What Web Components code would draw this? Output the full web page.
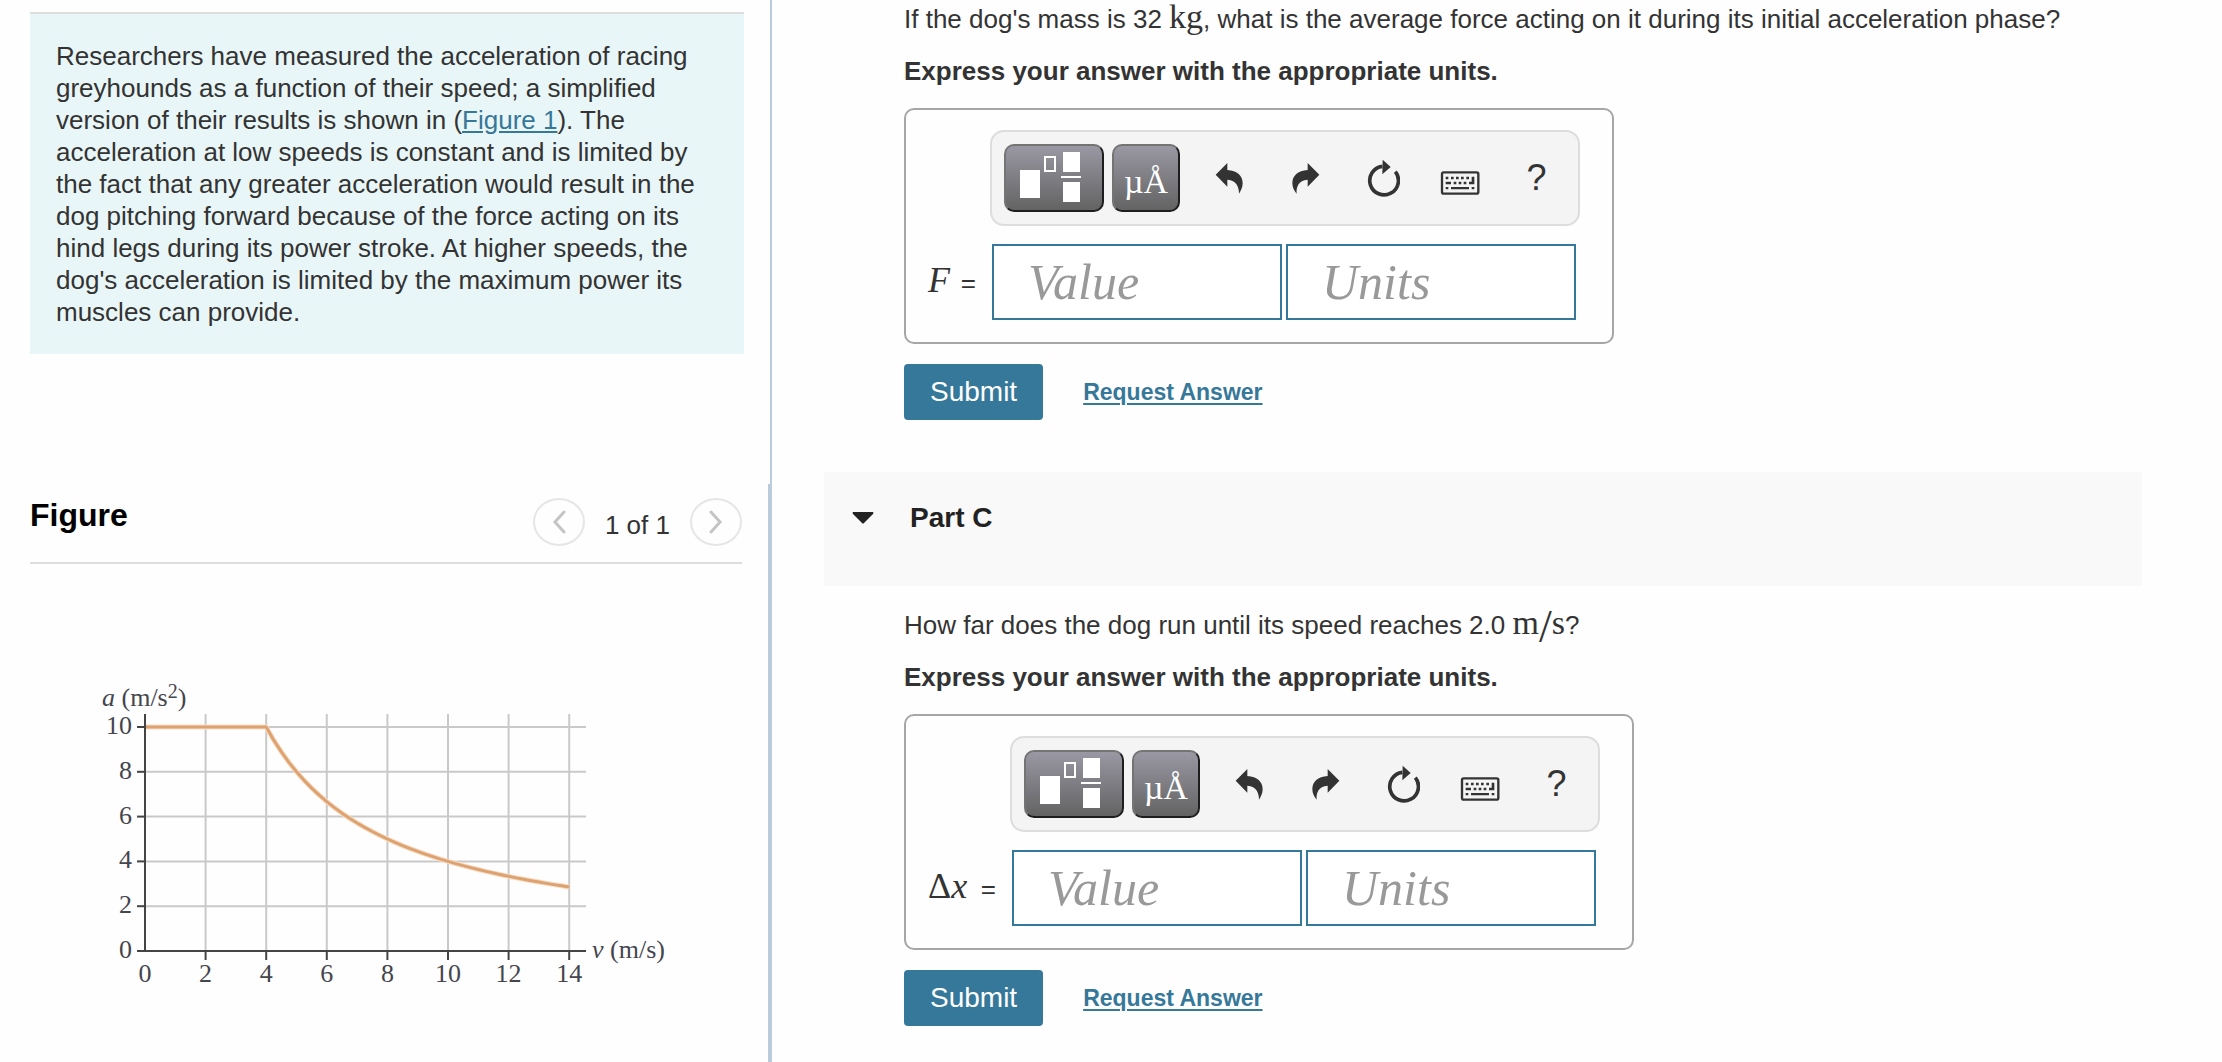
<!DOCTYPE html>
<html lang="en">
<head>
<meta charset="utf-8">
<title>Greyhound acceleration</title>
<style>
  html, body { margin: 0; }
  body {
    background: #fefefe;
    color: #333;
    font: 26px/32px "Liberation Sans", Arial, sans-serif;
  }
  a { color: #367899; }
  p { margin: 0; }
  .unit { font-family: "Liberation Serif", "Times New Roman", serif; font-size: 34px; line-height: 0; }
  .slash { font-size: 46px; vertical-align: -8px; }
</style>
</head>
<body>

<problem-page>
  <intro-panel slot="side">
    Researchers have measured the acceleration of racing greyhounds as a
    function of their speed; a simplified version of their results is shown in
    (<a href="#figure">Figure 1</a>). The acceleration at low speeds is constant
    and is limited by the fact that any greater acceleration would result in
    the dog pitching forward because of the force acting on its hind legs
    during its power stroke. At higher speeds, the dog's acceleration is
    limited by the maximum power its muscles can provide.
  </intro-panel>
  <figure-panel slot="side" id="figure" heading="Figure" position="1 of 1">
    <speed-chart></speed-chart>
  </figure-panel>

  <problem-part>
    <p>If the dog's mass is 32 <span class="unit">kg</span>, what is the average force acting on it during its initial acceleration phase?</p>
    <strong slot="instructions">Express your answer with the appropriate units.</strong>
    <answer-box slot="answer" symbol="&lt;i&gt;F&lt;/i&gt;"></answer-box>
  </problem-part>
  <problem-part heading="Part C">
    <p>How far does the dog run until its speed reaches 2.0 <span class="unit">m<span class="slash">/</span>s</span>?</p>
    <strong slot="instructions">Express your answer with the appropriate units.</strong>
    <answer-box slot="answer" symbol="Δ&lt;i&gt;x&lt;/i&gt;" wide></answer-box>
  </problem-part>
</problem-page>

<script>
'use strict';

class ProblemPage extends HTMLElement {
  constructor() {
    super();
    this.attachShadow({ mode: 'open' }).innerHTML = `
      <style>
        :host {
          display: grid;
          grid-template-columns: minmax(0, 386fr) minmax(0, 725fr);
          min-height: 100vh;
        }
        aside { display: flex; flex-direction: column; }
        main { padding: 0 80px 20px 52px; }
      </style>
      <aside><slot name="side"></slot></aside>
      <main><slot></slot></main>
    `;
  }
}

class IntroPanel extends HTMLElement {
  constructor() {
    super();
    this.attachShadow({ mode: 'open' }).innerHTML = `
      <style>
        :host {
          display: block;
          padding: 12px 26px 130px 30px;
          border-right: 2px solid #bccbdb;
        }
        div {
          padding: 26px;
          border-top: 2px solid #ddd;
          background: #e9f6f7;
        }
      </style>
      <div><slot></slot></div>
    `;
  }
}

class FigurePanel extends HTMLElement {
  constructor() {
    super();
    this.attachShadow({ mode: 'open' }).innerHTML = `
      <style>
        :host {
          display: block;
          flex: 1;
          padding: 14px 26px 0 30px;
          border-right: 4px solid #bccbdb;
        }
        header {
          display: flex;
          align-items: flex-start;
          justify-content: space-between;
          padding-bottom: 16px;
          border-bottom: 2px solid #ddd;
        }
        h2 { margin: 0; font-size: 32px; line-height: 34px; color: #000; }
        nav { display: flex; align-items: center; gap: 20px; }
        nav span { padding-top: 6px; }
        button {
          display: grid;
          place-items: center;
          width: 52px;
          height: 48px;
          padding: 0;
          border: 2px solid #e6e6e6;
          border-radius: 50%;
          background: none;
        }
        svg { fill: none; stroke: #c4c4c4; stroke-width: 3; stroke-linecap: round; }
      </style>
      <header>
        <h2>${this.getAttribute('heading')}</h2>
        <nav>
          <button aria-label="Previous figure"><svg width="16" height="24"><path d="M13 2L4 12L13 22"/></svg></button>
          <span>${this.getAttribute('position')}</span>
          <button aria-label="Next figure"><svg width="16" height="24"><path d="M3 2L12 12L3 22"/></svg></button>
        </nav>
      </header>
      <slot></slot>
    `;
  }
}

// acceleration against speed: flat up to 4 m/s, then limited by power (a = 40 / v)
class SpeedChart extends HTMLElement {
  constructor() {
    super();
    const x = v => 115 + v * 30.3;
    const y = a => 307 - a * 22.4;
    let grid = '';
    let ticks = '';
    let labels = '';

    for (let v = 0; v <= 14; v += 2) {
      if (v) {
        grid += `<path d="M${x(v)} 70V${y(0)}"/>`;
        ticks += `<path d="M${x(v)} ${y(0)}v9"/>`;
      }
      labels += `<text x="${x(v)}" y="338" text-anchor="middle">${v}</text>`;
    }
    for (let a = 0; a <= 10; a += 2) {
      if (a) grid += `<path d="M${x(0)} ${y(a)}H556"/>`;
      ticks += `<path d="M107 ${y(a)}H${x(0)}"/>`;
      labels += `<text x="102" y="${y(a) + 7}" text-anchor="end">${a}</text>`;
    }
    let curve = `M${x(0)} ${y(10)}H${x(4)}`;
    for (let v = 4.25; v <= 14; v += 0.25) {
      curve += `L${x(v)} ${y(40 / v)}`;
    }

    this.attachShadow({ mode: 'open' }).innerHTML = `
      <style>
        :host { display: block; padding-top: 80px; }
        svg { display: block; max-width: 100%; }
        text { font: 26px "Liberation Serif", "Times New Roman", serif; fill: #45454d; }
        .grid { stroke: #c9c9c9; stroke-width: 2; }
        .axis { stroke: #444; stroke-width: 2; fill: none; }
        .curve { fill: none; stroke-linejoin: round; }
      </style>
      <svg width="660" height="350" viewBox="0 0 660 350" role="img" aria-label="Acceleration against speed">
        <g class="grid">${grid}</g>
        <path class="curve" d="${curve}" stroke="#f8dcc2" stroke-width="5"/>
        <path class="curve" d="${curve}" stroke="#dda271" stroke-width="3"/>
        <g class="axis">${ticks}<path d="M${x(0)} 70V${y(0)}H556"/></g>
        ${labels}
        <text x="72" y="62"><tspan font-style="italic">a</tspan> (m/s<tspan font-size="20" dy="-8">2</tspan><tspan dy="8">)</tspan></text>
        <text x="562" y="314"><tspan font-style="italic">v</tspan> (m/s)</text>
      </svg>
    `;
  }
}

class ProblemPart extends HTMLElement {
  constructor() {
    super();
    const heading = this.getAttribute('heading');
    this.attachShadow({ mode: 'open' }).innerHTML = `
      <style>
        :host { display: block; }
        header {
          display: flex;
          gap: 36px;
          height: 50px;
          margin: 52px 0 20px;
          padding: 32px 28px;
          background: #f9f9f9;
          color: #222;
        }
        header svg { margin-top: 8px; }
        h2 { margin: 0; font-size: 28px; line-height: 28px; }
        section {
          display: flex;
          flex-direction: column;
          align-items: flex-start;
          gap: 20px;
          padding: 3px 0 0 80px;
        }
        ::slotted(strong) { padding-bottom: 1px; }
        footer { display: flex; align-items: center; gap: 40px; }
        button {
          height: 56px;
          padding: 0 26px;
          border: 0;
          border-radius: 4px;
          background: #367899;
          color: #fff;
          font: 28px/32px "Liberation Sans", Arial, sans-serif;
        }
        a { color: #367899; font-size: 23px; font-weight: bold; text-underline-offset: 3px; text-decoration-thickness: 2px; }
      </style>
      ${heading ? `
      <header>
        <svg width="22" height="12"><path d="M1 0H21Q22 1 21 2L12 11Q11 12 10 11L1 2Q0 1 1 0Z" fill="#222"/></svg>
        <h2>${heading}</h2>
      </header>` : ''}
      <section>
        <slot></slot>
        <slot name="instructions"></slot>
        <slot name="answer"></slot>
        <footer>
          <button>Submit</button>
          <a href="#">Request Answer</a>
        </footer>
      </section>
    `;
  }
}

class AnswerToolbar extends HTMLElement {
  constructor() {
    super();
    this.attachShadow({ mode: 'open' }).innerHTML = `
      <style>
        :host {
          display: flex;
          padding: 12px 3px 12px 12px;
          border: 2px solid #ddd;
          border-radius: 14px;
          background: #f4f4f4;
        }
        button {
          display: grid;
          place-items: center;
          flex: none;
          box-sizing: border-box;
          width: 77px;
          height: 68px;
          padding: 0;
          border: 0;
          background: none;
          color: #333;
          font: 36px/40px "Liberation Sans", Arial, sans-serif;
        }
        .dark {
          border: 2px solid;
          border-color: #747474 #1e1e1e #1e1e1e #747474;
          border-radius: 10px;
          background: linear-gradient(#9a98a3, #636363);
          color: #fff;
        }
        .templates { width: 100px; margin-right: 8px; }
        .units { width: 68px; margin-right: 10px; padding-top: 8px; font: 34px/40px "Liberation Serif", "Times New Roman", serif; }
        .keyboard { padding-top: 10px; }
        svg { display: block; fill: currentColor; }
      </style>
      <button class="dark templates" aria-label="Templates">
        <svg width="96" height="64" viewBox="2 2 96 64">
          <path d="M16 26h20v28h-20zM59 8h17v20h-17zM57 32h20v2h-20zM59 38h17v20h-17z"/>
          <path d="M41 13h10v14h-10z" fill="none" stroke="#fff" stroke-width="2"/>
        </svg>
      </button>
      <button class="dark units" aria-label="Units">µÅ</button>
      <button aria-label="Undo">
        <svg width="30" height="34" viewBox="700 121 90 102"><path d="M705 162L740 127V148C770 150 786 165 786 188C786 200 780 212 775 219C775 200 768 178 740 177V198Z"/></svg>
      </button>
      <button aria-label="Redo">
        <svg width="30" height="34" viewBox="33 121 90 102"><path d="M118 162L83 127V148C53 150 37 165 37 188C37 200 43 212 50 219C48 200 55 178 83 177V198Z"/></svg>
      </button>
      <button aria-label="Reset">
        <svg width="34" height="38" viewBox="255 117 102 114">
          <path d="M343 155A43 43 0 1 1 304 139" fill="none" stroke="#333" stroke-width="11"/>
          <path d="M305 119L329 141L304 163Z"/>
        </svg>
      </button>
      <button class="keyboard" aria-label="Keyboard shortcuts">
        <svg width="40" height="24" viewBox="474 153 120 72">
          <rect x="480" y="157" width="109" height="64" rx="5" fill="none" stroke="#333" stroke-width="7"/>
          <path d="M491 170h8v8h-8zM507 170h8v8h-8zM522 170h8v8h-8zM537 170h8v8h-8zM553 170h8v8h-8zM569 170h8v23h-16v-8h8zM491 185h16v8h-16zM515 185h8v8h-8zM530 185h8v8h-8zM545 185h8v8h-8zM491 201h8v7h-8zM507 201h54v7h-54zM569 201h8v7h-8z"/>
        </svg>
      </button>
      <button aria-label="Help">?</button>
    `;
  }
}

class AnswerBox extends HTMLElement {
  constructor() {
    super();
    this.attachShadow({ mode: 'open' }).innerHTML = `
      <style>
        :host {
          display: grid;
          grid-template-columns: 48px 590px;
          gap: 18px 14px;
          padding: 20px 32px 22px 22px;
          border: 2px solid #a6a6a6;
          border-radius: 10px;
        }
        :host([wide]) { grid-template-columns: 68px 590px; }
        answer-toolbar { grid-column: 2; }
        label { display: flex; align-items: baseline; justify-content: space-between; align-self: center; padding-bottom: 4px; }
        .symbol { font: 36px/40px "Liberation Serif", "Times New Roman", serif; }
        .fields { display: flex; gap: 4px; padding: 0 4px 0 2px; }
        input {
          flex: 1;
          min-width: 0;
          box-sizing: border-box;
          height: 76px;
          padding: 0 34px;
          border: 2px solid #367899;
          border-radius: 0;
          background: #fff;
          color: #333;
          font: italic 50px "Liberation Serif", "Times New Roman", serif;
        }
        input::placeholder { color: #999; opacity: 1; }
      </style>
      <answer-toolbar></answer-toolbar>
      <label for="value"><span class="symbol">${this.getAttribute('symbol')}</span><span>=</span></label>
      <div class="fields">
        <input id="value" type="text" placeholder="Value">
        <input type="text" placeholder="Units" aria-label="Units">
      </div>
    `;
  }
}

customElements.define('problem-page', ProblemPage);
customElements.define('intro-panel', IntroPanel);
customElements.define('figure-panel', FigurePanel);
customElements.define('speed-chart', SpeedChart);
customElements.define('problem-part', ProblemPart);
customElements.define('answer-toolbar', AnswerToolbar);
customElements.define('answer-box', AnswerBox);
</script>
</body>
</html>
